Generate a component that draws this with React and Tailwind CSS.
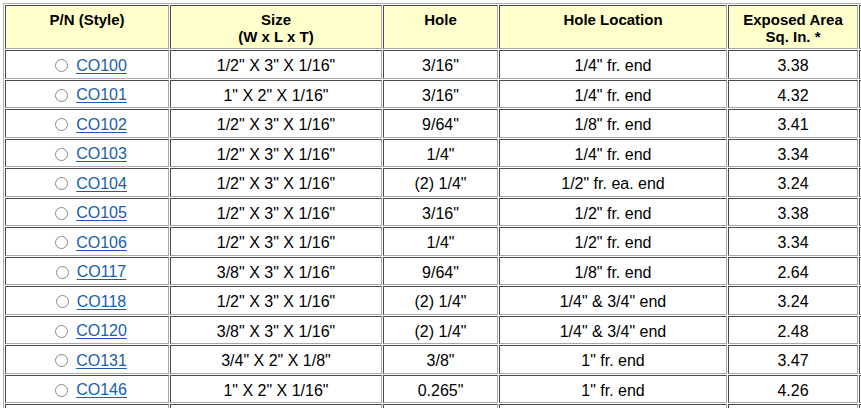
import React from 'react';

const rows = [
  ['CO100', '1/2" X 3" X 1/16"', '3/16"', '1/4" fr. end', '3.38'],
  ['CO101', '1" X 2" X 1/16"', '3/16"', '1/4" fr. end', '4.32'],
  ['CO102', '1/2" X 3" X 1/16"', '9/64"', '1/8" fr. end', '3.41'],
  ['CO103', '1/2" X 3" X 1/16"', '1/4"', '1/4" fr. end', '3.34'],
  ['CO104', '1/2" X 3" X 1/16"', '(2) 1/4"', '1/2" fr. ea. end', '3.24'],
  ['CO105', '1/2" X 3" X 1/16"', '3/16"', '1/2" fr. end', '3.38'],
  ['CO106', '1/2" X 3" X 1/16"', '1/4"', '1/2" fr. end', '3.34'],
  ['CO117', '3/8" X 3" X 1/16"', '9/64"', '1/8" fr. end', '2.64'],
  ['CO118', '1/2" X 3" X 1/16"', '(2) 1/4"', '1/4" & 3/4" end', '3.24'],
  ['CO120', '3/8" X 3" X 1/16"', '(2) 1/4"', '1/4" & 3/4" end', '2.48'],
  ['CO131', '3/4" X 2" X 1/8"', '3/8"', '1" fr. end', '3.47'],
  ['CO146', '1" X 2" X 1/16"', '0.265"', '1" fr. end', '4.26'],
];

// inset cell border: dark top/left, light bottom/right
const cell = 'border border-t-[#4a4a4a] border-l-[#4a4a4a] border-b-[#a8a8a8] border-r-[#a8a8a8] p-0 text-center';
const head = `${cell} bg-[#ffffcc] align-top pt-[5px] font-bold text-[15px] leading-[17px]`;
const body = `${cell} bg-white align-middle pt-[4px] text-[16px] leading-[18px] h-[28.5px]`;

const App = () => {
  return (
    <div className="w-[861px] h-[408px] overflow-hidden bg-white font-['Liberation_Sans',Arial,sans-serif] text-black">
      <table className="mt-[3px] ml-[3px] table-fixed border-separate border-spacing-[1px] border border-t-[#b0b0b0] border-l-[#b0b0b0] border-b-[#555] border-r-[#555] w-[1000px]">
        <colgroup>
          <col className="w-[164px]" />
          <col className="w-[212px]" />
          <col className="w-[115px]" />
          <col className="w-[228px]" />
          <col className="w-[130px]" />
          <col />
        </colgroup>
        <thead>
          <tr>
            <td className={`${head} h-[44px]`}>P/N (Style)</td>
            <td className={head}>
              Size
              <br />
              (W x L x T)
            </td>
            <td className={head}>Hole</td>
            <td className={head}>Hole Location</td>
            <td className={head}>
              Exposed Area
              <br />
              Sq. In. *
            </td>
            <td className={`${cell} bg-white`}></td>
          </tr>
        </thead>
        <tbody>
          {rows.map((r) => (
            <tr key={r[0]}>
              <td className={`${body} pl-[8px]`}>
                <span className="inline-flex items-center">
                  <span className="mr-[8px] inline-block h-[13px] w-[13px] rounded-full border border-[#8a8a8a] bg-white" />
                  <a href="#" className="text-[#1a5dab] underline underline-offset-[2px]">
                    {r[0]}
                  </a>
                </span>
              </td>
              <td className={body}>{r[1]}</td>
              <td className={body}>{r[2]}</td>
              <td className={body}>{r[3]}</td>
              <td className={body}>{r[4]}</td>
              <td className={body}></td>
            </tr>
          ))}
          <tr>
            <td className={body}></td>
            <td className={`${body} bg-[#ffffcc]`}></td>
            <td className={`${body} bg-[#ffffcc]`}></td>
            <td className={`${body} bg-[#ffffcc]`}></td>
            <td className={`${body} bg-[#ffffcc]`}></td>
            <td className={`${body} bg-[#ffffcc]`}></td>
          </tr>
        </tbody>
      </table>
    </div>
  );
};

export default App;
